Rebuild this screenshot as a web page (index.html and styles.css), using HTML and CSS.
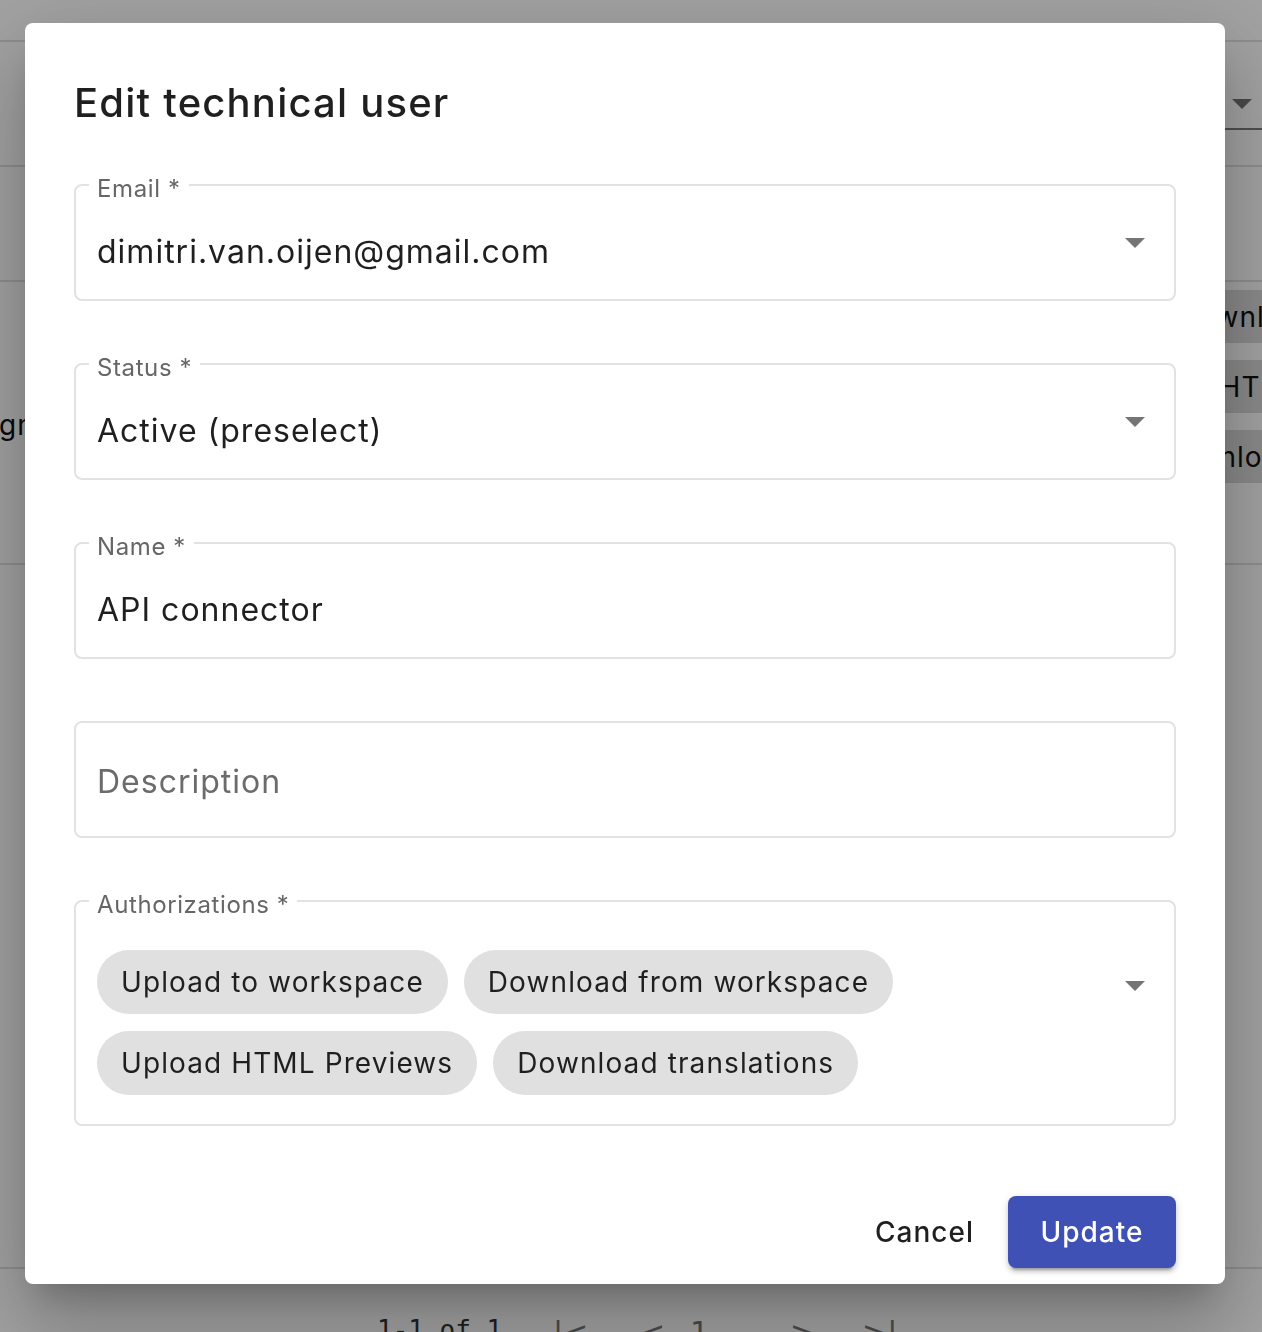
FILE: index.html
```html
<!DOCTYPE html>
<html lang="en">
<head>
<meta charset="utf-8">
<title>Edit technical user</title>
<link rel="stylesheet" href="styles.css">
</head>
<body>
<div class="page">
  <div class="bg-row r1"></div>
  <div class="bg-row r2">
    <div class="bg-select"><span class="bg-caret"></span></div>
  </div>
  <div class="bg-row r3"></div>
  <div class="bg-row r4">
    <span class="bg-email">gmail.com</span>
    <div class="bg-chips">
      <span class="bg-chip c1">Download from workspace</span>
      <span class="bg-chip c2">Upload HTML Previews</span>
      <span class="bg-chip c3">Download translations</span>
    </div>
  </div>
  <div class="bg-row r5"></div>
  <div class="bg-row r6">
    <span class="pager-text">1-1 of 1</span>
    <span class="pager-btn p1">|&lt;</span>
    <span class="pager-btn p2">&lt;</span>
    <span class="pager-btn p3">1</span>
    <span class="pager-btn p4">&gt;</span>
    <span class="pager-btn">&gt;|</span>
  </div>
</div>
<div class="backdrop"></div>
<div class="dialog" role="dialog">
  <h2 class="title">Edit technical user</h2>
  <div class="fields">
    <div class="field labelled">
      <span class="label">Email *</span>
      <span class="value">dimitri.van.oijen@gmail.com</span>
      <span class="caret"></span>
    </div>
    <div class="field labelled">
      <span class="label">Status *</span>
      <span class="value">Active (preselect)</span>
      <span class="caret"></span>
    </div>
    <div class="field labelled">
      <span class="label">Name *</span>
      <span class="value">API connector</span>
    </div>
    <div class="field plain">
      <span class="value placeholder">Description</span>
    </div>
    <div class="field auth">
      <span class="label">Authorizations *</span>
      <div class="chips">
        <span class="chip">Upload to workspace</span>
        <span class="chip">Download from workspace</span>
        <span class="chip">Upload HTML Previews</span>
        <span class="chip">Download translations</span>
      </div>
      <span class="caret auth-caret"></span>
    </div>
  </div>
  <div class="actions">
    <button class="btn btn-text">Cancel</button>
    <button class="btn btn-primary">Update</button>
  </div>
</div>
</body>
</html>
```

FILE: styles.css
```css
* { box-sizing: border-box; }
html, body {
  margin: 0;
  padding: 0;
  height: 100%;
  overflow: hidden;
}
body {
  font-family: "Inter", "Open Sans", sans-serif;
  background: #ffffff;
  color: #1f1f1f;
}

/* background page */
.page {
  display: flex;
  flex-direction: column;
  width: 1262px;
}
.bg-row {
  border-bottom: 2px solid #e0e0e0;
  display: flex;
  flex-shrink: 0;
}
.r1 { height: 42px; }
.r2 { height: 125px; justify-content: flex-end; }
.r3 { height: 115px; }
.r4 { height: 283px; justify-content: space-between; align-items: flex-start; }
.r5 { height: 704px; }
.r6 { border-bottom: none; height: 100px; align-items: flex-start; padding: 46px 0 0 377px; }

.bg-select {
  width: 140px;
  height: 60px;
  margin-top: 28px;
  border-bottom: 2px solid #7c7c7c;
  display: flex;
  justify-content: flex-end;
  padding: 29px 10px 0 0;
}
.bg-caret {
  width: 0;
  height: 0;
  border-left: 10px solid transparent;
  border-right: 10px solid transparent;
  border-top: 10px solid #757575;
}
.bg-email {
  font-size: 28px;
  letter-spacing: 1px;
  margin-top: 126px;
  margin-left: -1px;
  color: #111;
  white-space: nowrap;
}
.bg-chips {
  display: flex;
  flex-direction: column;
  align-items: flex-start;
  gap: 17px;
  padding-top: 8px;
  width: 160px;
  overflow: hidden;
}
.bg-chip {
  height: 53px;
  display: flex;
  align-items: center;
  background: #dadada;
  border-radius: 26px;
  font-size: 28px;
  letter-spacing: 1px;
  color: #111;
  white-space: nowrap;
  padding: 0 20px;
}
.c1 { margin-left: 55px; }
.c2 { margin-left: -12px; }
.c3 { margin-left: 35px; }
.pager-text {
  font-family: "DejaVu Sans Mono", monospace;
  font-size: 26px;
  color: #333;
  width: 176px;
}
.pager-btn {
  font-family: "DejaVu Sans", sans-serif;
  font-size: 30px;
  color: #777;
}
.p1 { width: 87px; }
.p2 { width: 50px; }
.p3 { width: 100px; }
.p4 { width: 72px; }

.backdrop {
  position: fixed;
  inset: 0;
  background: rgba(0, 0, 0, 0.36);
}

/* dialog */
.dialog {
  position: absolute;
  left: 25px;
  top: 23px;
  width: 1200px;
  background: #ffffff;
  border-radius: 8px;
  box-shadow: 0 22px 30px -14px rgba(0,0,0,0.2), 0 48px 76px 6px rgba(0,0,0,0.14), 0 18px 92px 16px rgba(0,0,0,0.12);
  padding: 48px 49px 16px;
}
.title {
  margin: 0;
  font-size: 40px;
  line-height: 64px;
  font-weight: 500;
  letter-spacing: 1.2px;
  color: #1f1f1f;
}
.fields {
  display: flex;
  flex-direction: column;
  gap: 62px;
  margin-top: 49px;
}
.field {
  position: relative;
  height: 117px;
  border: 2px solid #e2e2e2;
  border-radius: 8px;
  display: flex;
  align-items: center;
  padding: 0 29px 0 21px;
}
.field.labelled { padding-top: 18px; }
.field.plain { padding-top: 4px; }
.label {
  position: absolute;
  top: -9px;
  left: 13px;
  padding: 0 8px;
  background: #ffffff;
  font-size: 24px;
  line-height: 24px;
  letter-spacing: 0.6px;
  color: #666666;
}
.value {
  flex: 1;
  font-size: 32px;
  letter-spacing: 1px;
  color: #1f1f1f;
  white-space: nowrap;
}
.placeholder { color: #6b6b6b; }
.caret {
  width: 0;
  height: 0;
  border-left: 10px solid transparent;
  border-right: 10px solid transparent;
  border-top: 10px solid #757575;
}
.field.labelled .caret { margin-top: -18px; }
.field.auth {
  height: auto;
  align-items: flex-start;
  padding: 48px 29px 29px 21px;
}
.chips {
  flex: 1;
  display: flex;
  flex-wrap: wrap;
  gap: 17px 16px;
  padding-right: 40px;
}
.chip {
  height: 64px;
  border-radius: 32px;
  background: #e0e0e0;
  display: flex;
  align-items: center;
  padding: 0 24px;
  font-size: 28px;
  letter-spacing: 1.1px;
  color: #1f1f1f;
  white-space: nowrap;
}
.auth-caret { margin-top: 31px; }

.actions {
  display: flex;
  justify-content: flex-end;
  align-items: center;
  gap: 18px;
  margin-top: 70px;
}
.btn {
  font-family: inherit;
  font-size: 28px;
  font-weight: 500;
  letter-spacing: 1px;
  border: none;
  cursor: pointer;
  border-radius: 8px;
}
.btn-text {
  background: transparent;
  color: #1f1f1f;
  padding: 12px 16px;
}
.btn-primary {
  background: #3f51b5;
  color: #ffffff;
  width: 168px;
  height: 72px;
  box-shadow: 0 6px 2px -4px rgba(0,0,0,0.2), 0 4px 4px 0 rgba(0,0,0,0.14), 0 2px 10px 0 rgba(0,0,0,0.12);
}
```
